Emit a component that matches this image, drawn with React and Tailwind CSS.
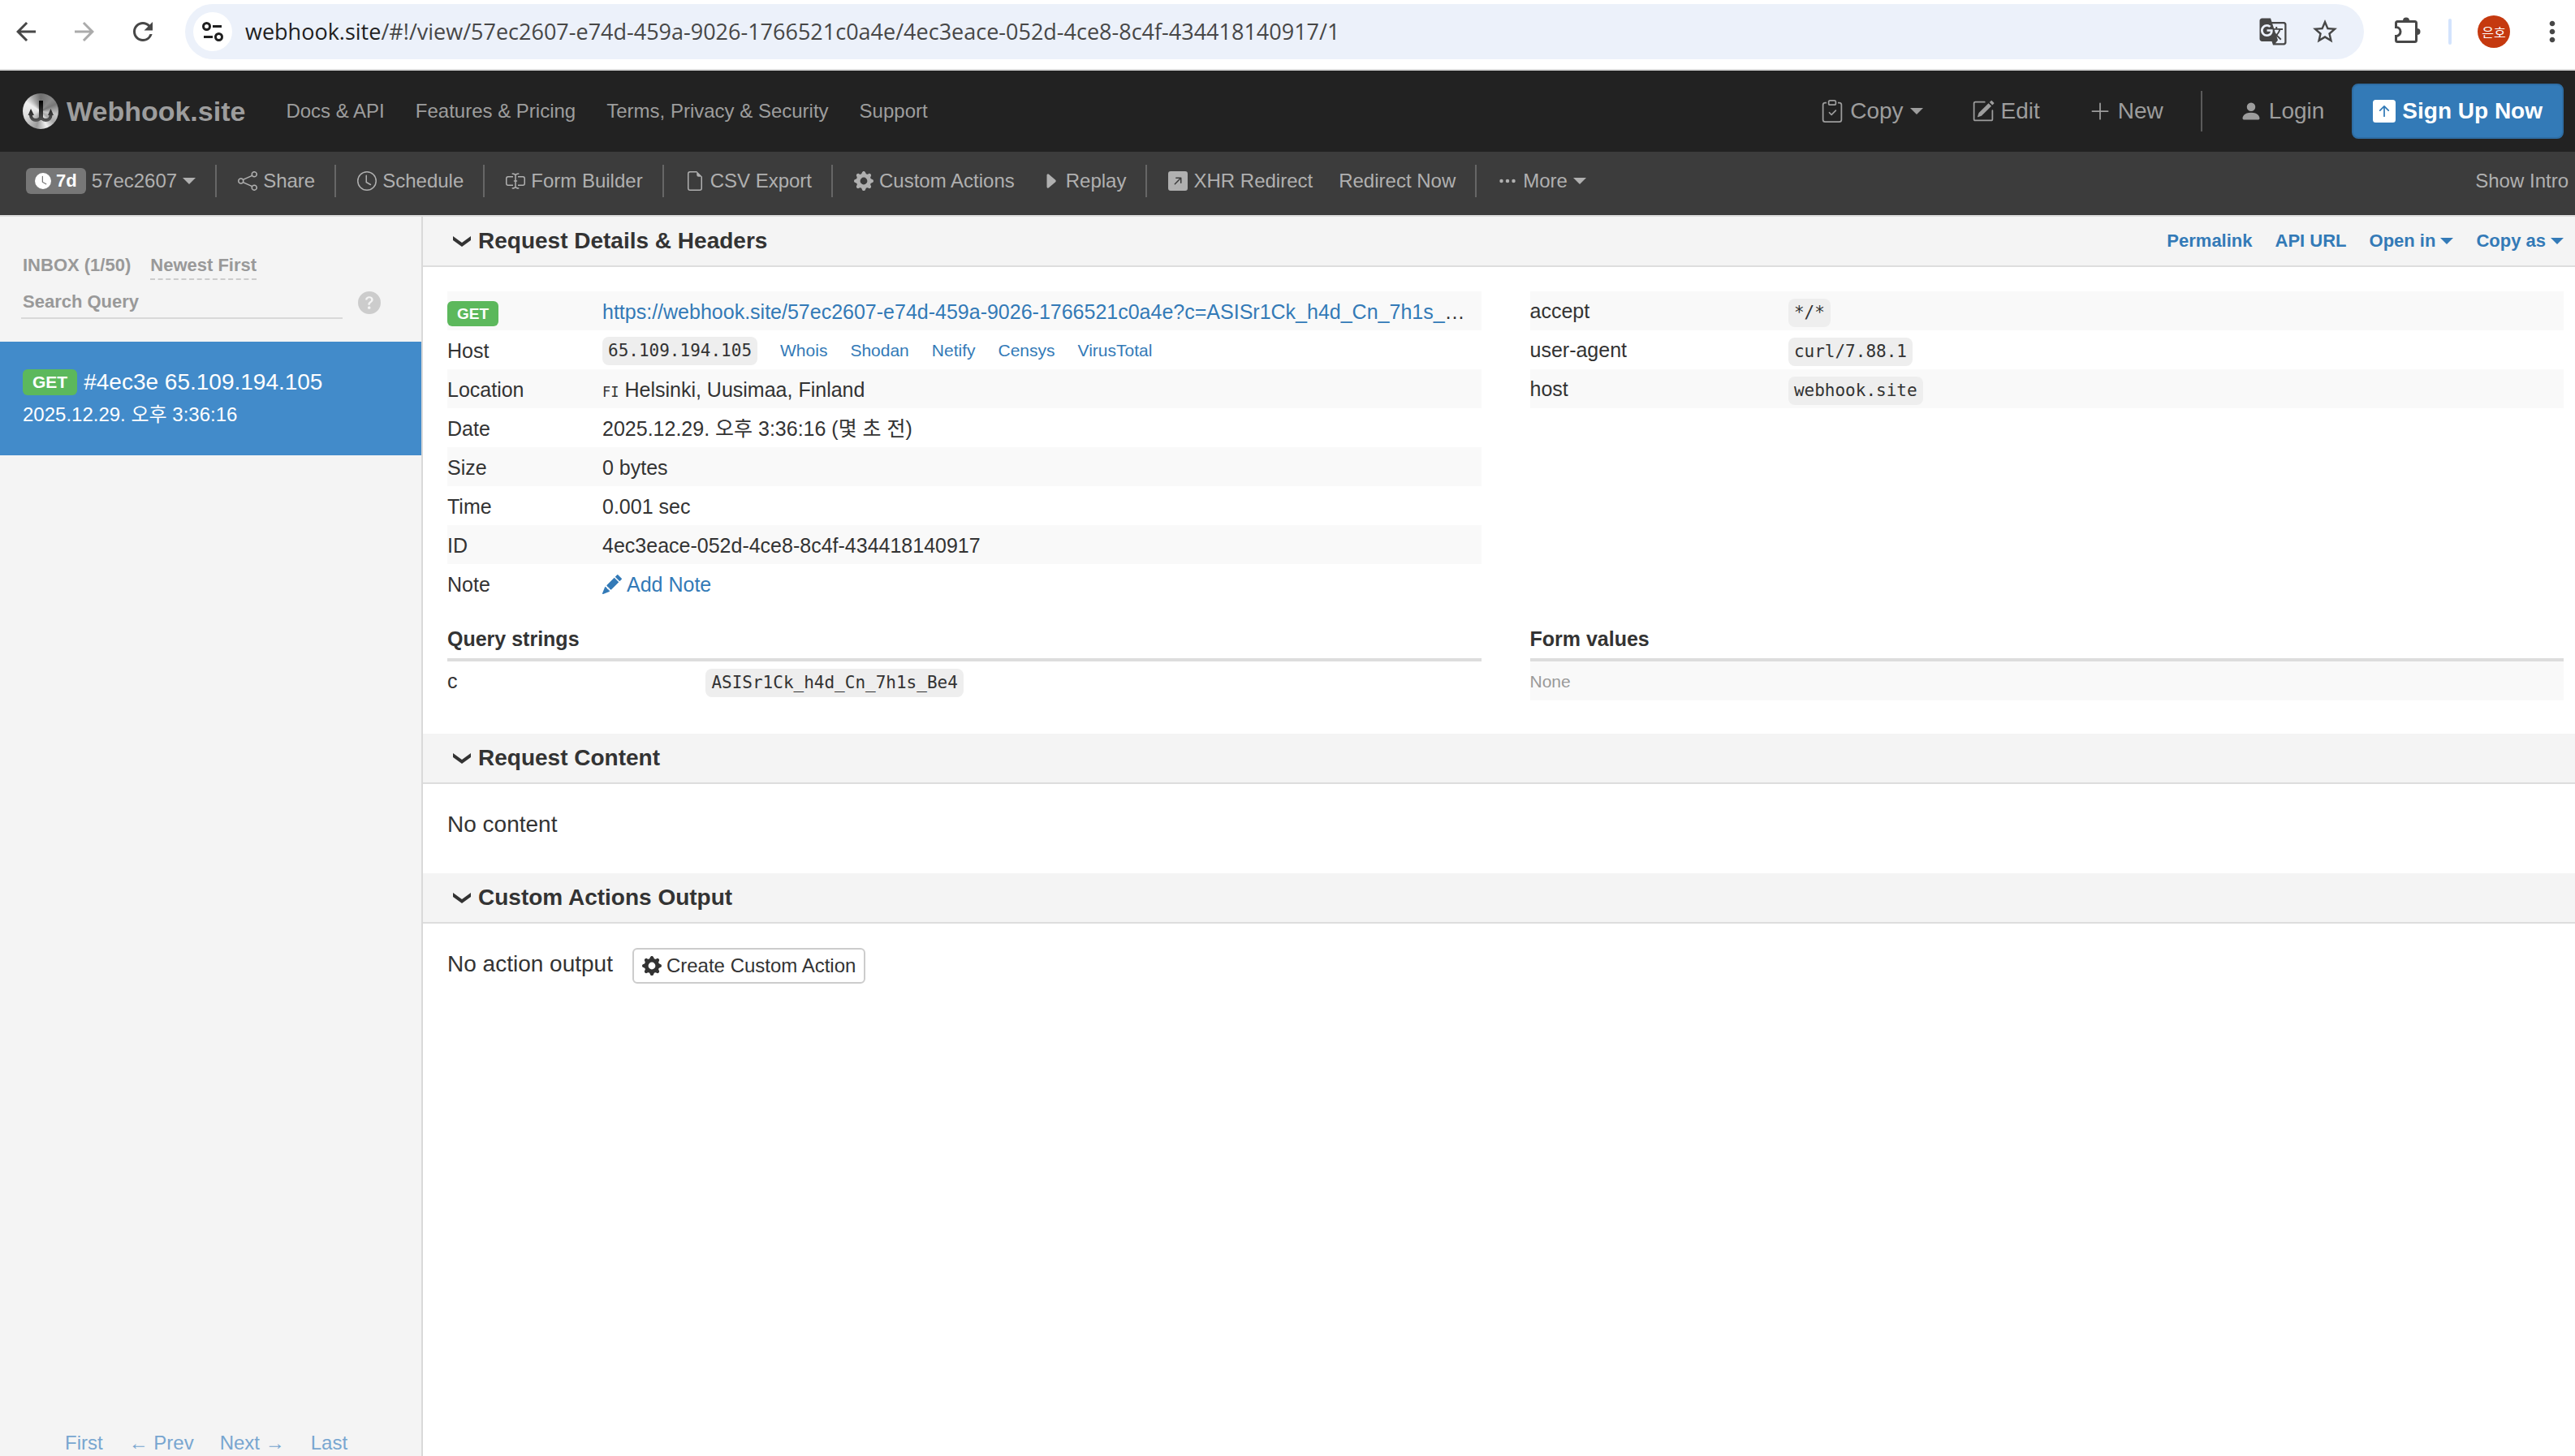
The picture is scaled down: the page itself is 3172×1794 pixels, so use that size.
import React from "react";
import {
  BsShare, BsClock, BsClockFill, BsInputCursorText, BsFileEarmark, BsGearFill, BsCaretRightFill,
  BsArrowUpRightSquareFill, BsThreeDots, BsClipboardCheck, BsPencilSquare, BsPlusLg,
  BsPersonFill, BsArrowUpSquareFill, BsPencilFill, BsQuestionCircleFill,
} from "react-icons/bs";
import { MdArrowBack, MdArrowForward, MdRefresh, MdGTranslate, MdStarBorder, MdMoreVert } from "react-icons/md";

function Caret() {
  return <span className="inline-block border-x-8 border-t-8 border-x-transparent border-t-current" />;
}

function BrowserBar() {
  return (
    <div className="flex h-[87px] items-center border-b-2 border-[#dcdcdc] bg-white pb-2 pl-[14px] pr-2 text-[#474747]">
      <div className="mr-[34px] flex gap-9">
        <button aria-label="Back"><MdArrowBack className="size-9" /></button>
        <button aria-label="Forward" className="text-[#ababab]"><MdArrowForward className="size-9" /></button>
        <button aria-label="Reload"><MdRefresh className="size-9" /></button>
      </div>
      <div className="flex h-17 flex-1 items-center rounded-full bg-[#ecf1fa] px-[10px]">
        <button aria-label="Site information" className="mr-4 grid size-12 place-items-center rounded-full bg-white text-[#1f1f1f]">
          <svg viewBox="0 0 26 26" className="size-[26px]" fill="none" stroke="currentColor" strokeWidth="3">
            <circle cx="5.500" cy="6.500" r="4" /><path d="M13 6.500h11M2 19.500h11" /><circle cx="20.500" cy="19.500" r="4" />
          </svg>
        </button>
        <div className="flex-1 whitespace-nowrap font-['Open_Sans',sans-serif] text-[27px] leading-9">
          <span className="text-[#1f1f1f]">webhook.site</span>/#!/view/57ec2607-e74d-459a-9026-1766521c0a4e/4ec3eace-052d-4ce8-8c4f-434418140917/1
        </div>
        <button aria-label="Translate" className="mr-7"><MdGTranslate className="size-9" /></button>
        <button aria-label="Bookmark" className="mr-5"><MdStarBorder className="size-9" /></button>
      </div>
      <button aria-label="Extensions" className="ml-9">
        <svg viewBox="0 0 36 36" className="size-9">
          <path d="M5.500 5.500h21q2 0 2 2v21q0 2-2 2h-21q-2 0-2-2v-5a5.500 5.500 0 0 0 0-11v-5q0-2 2-2z" fill="none" stroke="currentColor" strokeWidth="3" />
          <path d="M12 4.500a4 4 0 0 1 8 0zM29.500 14a4 4 0 0 1 0 8z" fill="currentColor" />
        </svg>
      </button>
      <span className="mx-8 h-8 w-1 rounded bg-[#d3e3fd]" />
      <button className="grid size-10 place-items-center rounded-full bg-[#c5390f] font-['Noto_Sans_CJK_KR',sans-serif] text-[16px] text-white">은호</button>
      <button aria-label="Menu" className="ml-8"><MdMoreVert className="size-10" /></button>
    </div>
  );
}

function Logo() {
  return (
    <span className="block size-11 rounded-full bg-[conic-gradient(#6f6f6f,#8a8a8a_12%,#777_18%,#c8c8c8_28%,#a8a8a8_36%,#f0f0f0_44%,#9a9a9a_54%,#bdbdbd_62%,#dedede_70%,#efefef_84%,#a5a5a5_92%,#6f6f6f)]">
      <svg viewBox="0 0 44 44" className="size-11">
        <defs>
          <linearGradient id="hook" x1="0" y1="9" x2="0" y2="36" gradientUnits="userSpaceOnUse">
            <stop offset="0" stopColor="#000" /><stop offset="1" stopColor="#5a5a5a" />
          </linearGradient>
        </defs>
        <g fill="none" stroke="url(#hook)" strokeWidth="4">
          <path d="M10 24v3c0 8 12.500 8 12.500 0 0 8 12 8 12 0v-3" />
        </g>
        <path d="M20 9h5v21h-5zM6.500 27l3.500-8 4 8zM31 27l3.500-8 3.500 8z" fill="url(#hook)" />
      </svg>
    </span>
  );
}

function TopNav() {
  const links = ["Docs & API", "Features & Pricing", "Terms, Privacy & Security", "Support"];
  return (
    <nav className="flex h-[100px] items-center bg-[#222] pl-7 pr-[14px] text-[#9d9d9d]">
      <a href="#home" className="flex items-center gap-[10px] text-[34px] font-bold leading-10"><Logo />Webhook.site</a>
      <div className="ml-[50px] flex gap-[38px] text-[24px] leading-8">
        {links.map((l) => <a key={l} href="#nav">{l}</a>)}
      </div>
      <div className="ml-auto flex items-center text-[28px] leading-10">
        <button className="mr-[60px] flex items-center gap-2"><BsClipboardCheck className="size-7" />Copy<Caret /></button>
        <button className="mr-[60px] flex items-center gap-2"><BsPencilSquare className="size-7" />Edit</button>
        <button className="flex items-center gap-2"><BsPlusLg className="size-7" />New</button>
        <span className="mx-[46px] h-[50px] w-0.5 bg-[#5a5a5a]" />
        <a href="#login" className="mr-[34px] flex items-center gap-2"><BsPersonFill className="size-7" />Login</a>
        <a href="#signup" className="flex h-17 items-center gap-2 rounded-lg border-2 border-[#2e6da4] bg-[#337ab7] px-6 font-bold text-white"><BsArrowUpSquareFill className="size-7" />Sign Up Now</a>
      </div>
    </nav>
  );
}

function Divider() {
  return <span className="ml-6 mr-[26px] h-10 w-0.5 bg-[#666]" />;
}

function Tool({ icon: Icon, children }) {
  return <button className="flex items-center gap-[7px]">{Icon && <Icon className="size-6" />}{children}</button>;
}

function Toolbar() {
  return (
    <div className="flex h-20 items-center border-b-2 border-[#ddd] bg-[#3c3c3c] pb-[6px] pl-8 pr-2 text-[24px] leading-8 text-[#b0b0b0]">
      <button className="flex items-center gap-[7px]">
        <span className="flex h-8 items-center gap-[6px] rounded-md bg-[#777] px-[11px] text-[22px] font-bold text-white"><BsClockFill className="size-5" />7d</span>
        57ec2607<Caret />
      </button>
      <Divider /><Tool icon={BsShare}>Share</Tool>
      <Divider /><Tool icon={BsClock}>Schedule</Tool>
      <Divider /><Tool icon={BsInputCursorText}>Form Builder</Tool>
      <Divider /><Tool icon={BsFileEarmark}>CSV Export</Tool>
      <Divider /><Tool icon={BsGearFill}>Custom Actions</Tool>
      <span className="w-8" /><Tool icon={BsCaretRightFill}>Replay</Tool>
      <Divider /><Tool icon={BsArrowUpRightSquareFill}>XHR Redirect</Tool>
      <span className="w-8" /><Tool>Redirect Now</Tool>
      <Divider /><Tool icon={BsThreeDots}>More<Caret /></Tool>
      <button className="ml-auto">Show Intro</button>
    </div>
  );
}

function Sidebar() {
  return (
    <aside className="flex w-[521px] shrink-0 flex-col border-r-2 border-[#d9d9d9] bg-[#f4f4f4]">
      <div className="flex h-[154px] flex-col pl-[26px] pr-[50px] pt-11 text-[22px] font-bold text-[#999]">
        <div className="flex items-start gap-6 pl-0.5 leading-8">
          <span>INBOX (1/50)</span>
          <button className="border-b-2 border-dashed border-[#ccc]">Newest First</button>
        </div>
        <div className="mt-2 flex items-center justify-between">
          <input aria-label="Search Query" placeholder="Search Query" className="h-10 w-[396px] border-b-2 border-[#d9d9d9] bg-transparent px-0.5 outline-none placeholder:text-[#999] placeholder:opacity-100" />
          <BsQuestionCircleFill className="size-7 text-[#ccc]" />
        </div>
      </div>
      <a href="#request" className="block h-35 bg-[#428bca] pl-7 pt-8 text-white">
        <div className="flex items-center gap-2 text-[28px] leading-9">
          <span className="rounded-md bg-[#5cb85c] px-3 text-[21px] font-bold leading-8">GET</span>#4ec3e 65.109.194.105
        </div>
        <div className="mt-1 text-[24px] leading-9">2025.12.29. 오후 3:36:16</div>
      </a>
      <div className="mt-auto flex gap-8 pl-20 text-[24px] leading-8 text-[#78a6d0]">
        <a href="#first">First</a><a href="#prev">← Prev</a><a href="#next">Next →</a><a href="#last">Last</a>
      </div>
    </aside>
  );
}

function SectionHeader({ title, children }) {
  return (
    <header className="flex h-[62px] items-center border-b-2 border-[#ddd] bg-[#f4f4f4] pl-9 pr-[14px]">
      <button className="flex items-center gap-2 text-[28px] font-bold leading-10">
        <svg viewBox="0 0 24 24" className="size-6" fill="currentColor"><path d="M1 6l11 8 11-8v5l-11 8-11-8z" /></svg>
        <h2>{title}</h2>
      </button>
      {children}
    </header>
  );
}

function Code({ children }) {
  return <code className="inline-block rounded-lg bg-[#eee] px-[7px] align-middle font-['DejaVu_Sans_Mono',monospace] text-[21px] leading-[35px]">{children}</code>;
}

function Get() {
  return <span className="inline-block rounded-md bg-[#5cb85c] px-3 align-middle text-[19px] font-bold leading-[31px] text-white">GET</span>;
}

function Details() {
  const link = "text-[#337ab7]";
  const rows = [
    [<Get />, <a href="#url" className={link}>https://webhook.site/57ec2607-e74d-459a-9026-1766521c0a4e?c=ASISr1Ck_h4d_Cn_7h1s_Be4</a>],
    ["Host", <span className="flex items-center gap-7 text-[21px]"><Code>65.109.194.105</Code>{["Whois", "Shodan", "Netify", "Censys", "VirusTotal"].map((t) => <a key={t} href="#lookup" className={link}>{t}</a>)}</span>],
    ["Location", <><span className="font-['DejaVu_Sans_Mono',monospace] text-[17px] leading-6">FI</span> Helsinki, Uusimaa, Finland</>],
    ["Date", "2025.12.29. 오후 3:36:16 (몇 초 전)"],
    ["Size", "0 bytes"],
    ["Time", "0.001 sec"],
    ["ID", "4ec3eace-052d-4ce8-8c4f-434418140917"],
    ["Note", <a href="#note" className="flex items-center gap-[6px] text-[#337ab7]"><BsPencilFill className="size-6" />Add Note</a>],
  ];
  return (
    <table className="w-full table-fixed">
      <tbody>
        {rows.map(([k, v], i) => (
          <tr key={i} className="h-12 odd:bg-[#f9f9f9]">
            <td className="w-[15%] p-0 pt-0.5">{k}</td>
            <td className="truncate p-0 pr-2 pt-0.5">{v}</td>
          </tr>
        ))}
      </tbody>
    </table>
  );
}

function Pairs({ rows, rowClass }) {
  return (
    <table className="w-full table-fixed self-start">
      <tbody>
        {rows.map(([k, v]) => (
          <tr key={k} className={rowClass}>
            <td className="w-1/4 p-0">{k}</td>
            <td className="p-0 pt-0.5"><Code>{v}</Code></td>
          </tr>
        ))}
      </tbody>
    </table>
  );
}

export default function App() {
  return (
    <div className="flex min-h-screen flex-col bg-white font-['Liberation_Sans','Noto_Sans_CJK_KR',sans-serif] text-[#333]">
      <BrowserBar />
      <TopNav />
      <Toolbar />
      <div className="flex flex-1">
        <Sidebar />
        <main className="min-w-0 flex-1">
          <SectionHeader title="Request Details & Headers">
            <div className="ml-auto flex gap-7 text-[22px] font-bold leading-8 text-[#337ab7]">
              <a href="#permalink">Permalink</a>
              <a href="#api">API URL</a>
              <button className="flex items-center gap-[6px]">Open in<Caret /></button>
              <button className="flex items-center gap-[6px]">Copy as<Caret /></button>
            </div>
          </SectionHeader>
          <div className="grid grid-cols-2 gap-x-[60px] pb-[41px] pl-[30px] pr-[14px] pt-[30px] text-[25px] leading-9">
            <Details />
            <Pairs rowClass="h-12 odd:bg-[#f9f9f9]" rows={[["accept", "*/*"], ["user-agent", "curl/7.88.1"], ["host", "webhook.site"]]} />
            <section>
              <h3 className="border-b-4 border-[#ddd] pb-[6px] pt-[26px] font-bold">Query strings</h3>
              <Pairs rowClass="h-12" rows={[["c", "ASISr1Ck_h4d_Cn_7h1s_Be4"]]} />
            </section>
            <section>
              <h3 className="border-b-4 border-[#ddd] pb-[6px] pt-[26px] font-bold">Form values</h3>
              <p className="bg-[#f9f9f9] pt-0.5 text-[21px] leading-[46px] text-[#999]">None</p>
            </section>
          </div>
          <SectionHeader title="Request Content" />
          <p className="px-[30px] pb-10 pt-[30px] text-[28px] leading-10">No content</p>
          <SectionHeader title="Custom Actions Output" />
          <div className="flex items-start gap-6 px-[30px] pt-[30px] text-[28px] leading-10">
            No action output
            <button className="flex h-11 items-center gap-[6px] rounded-md border-2 border-[#ccc] bg-white px-[10px] text-[24px]"><BsGearFill className="size-6" />Create Custom Action</button>
          </div>
        </main>
      </div>
    </div>
  );
}
